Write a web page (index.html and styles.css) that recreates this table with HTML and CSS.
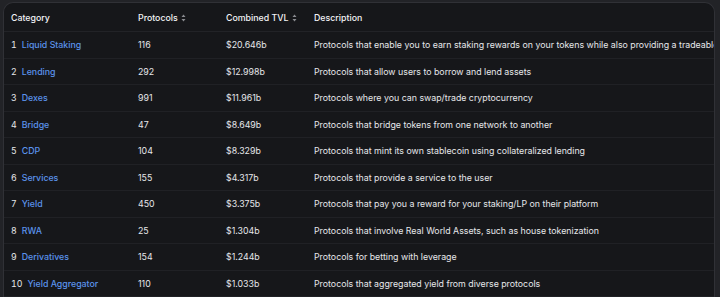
FILE: index.html
```html
<!DOCTYPE html>
<html lang="en">
<head>
    <meta charset="UTF-8">
    <title>Categories</title>
    <link rel="stylesheet" href="styles.css">
</head>
<body>
    <div class="card">
        <table class="cat-table">
            <thead>
                <tr>
                    <th class="col-cat">Category</th>
                    <th class="col-num">Protocols <svg class="sort" width="5" height="8" viewBox="0 0 5 8"><path d="M2.5 0.5 L4.5 3 L0.5 3 Z M2.5 7.5 L4.5 5 L0.5 5 Z" fill="#8a8b90"/></svg></th>
                    <th class="col-tvl">Combined TVL <svg class="sort" width="5" height="8" viewBox="0 0 5 8"><path d="M2.5 0.5 L4.5 3 L0.5 3 Z M2.5 7.5 L4.5 5 L0.5 5 Z" fill="#8a8b90"/></svg></th>
                    <th>Description</th>
                </tr>
            </thead>
            <tbody>
                <tr><td><span class="idx">1</span><a href="#">Liquid Staking</a></td><td>116</td><td>$20.646b</td><td>Protocols that enable you to earn staking rewards on your tokens while also providing a tradeable liquid receipt</td></tr>
                <tr><td><span class="idx">2</span><a href="#">Lending</a></td><td>292</td><td>$12.998b</td><td>Protocols that allow users to borrow and lend assets</td></tr>
                <tr><td><span class="idx">3</span><a href="#">Dexes</a></td><td>991</td><td>$11.961b</td><td>Protocols where you can swap/trade cryptocurrency</td></tr>
                <tr><td><span class="idx">4</span><a href="#">Bridge</a></td><td>47</td><td>$8.649b</td><td>Protocols that bridge tokens from one network to another</td></tr>
                <tr><td><span class="idx">5</span><a href="#">CDP</a></td><td>104</td><td>$8.329b</td><td>Protocols that mint its own stablecoin using collateralized lending</td></tr>
                <tr><td><span class="idx">6</span><a href="#">Services</a></td><td>155</td><td>$4.317b</td><td>Protocols that provide a service to the user</td></tr>
                <tr><td><span class="idx">7</span><a href="#">Yield</a></td><td>450</td><td>$3.375b</td><td>Protocols that pay you a reward for your staking/LP on their platform</td></tr>
                <tr><td><span class="idx">8</span><a href="#">RWA</a></td><td>25</td><td>$1.304b</td><td>Protocols that involve Real World Assets, such as house tokenization</td></tr>
                <tr><td><span class="idx">9</span><a href="#">Derivatives</a></td><td>154</td><td>$1.244b</td><td>Protocols for betting with leverage</td></tr>
                <tr><td><span class="idx">10</span><a href="#">Yield Aggregator</a></td><td>110</td><td>$1.033b</td><td>Protocols that aggregated yield from diverse protocols</td></tr>
            </tbody>
        </table>
    </div>
</body>
</html>
```

FILE: styles.css
```css
body {
    margin: 0;
    padding: 2px 5px 0 3px;
    background-color: #222327;
    font-family: Inter, "Noto Sans", sans-serif;
    font-size: 8.8px;
    color: #e6e7ea;
    overflow: hidden;
    height: 297px;
    box-sizing: border-box;
}
.card {
    background-color: #16171a;
    border: 1px solid #303136;
    border-bottom: none;
    border-radius: 10px 10px 0 0;
    overflow: hidden;
    height: 295px;
}
.cat-table {
    border-collapse: collapse;
    white-space: nowrap;
    table-layout: fixed;
    width: 1000px;
}
.cat-table th {
    text-align: left;
    font-weight: 500;
    color: #f2f3f5;
    height: 28px;
    padding: 0 0 0 7px;
    border-bottom: 1px solid #222327;
}
.cat-table td {
    height: 25.5px;
    padding: 0 0 0 7px;
    border-bottom: 1px solid #202125;
}
.col-cat {
    width: 120px;
}
.col-num {
    width: 81px;
}
.col-tvl {
    width: 81px;
}
.sort {
    vertical-align: middle;
    margin-left: 1px;
    margin-top: -1px;
}
.idx {
    display: inline-block;
    margin-right: 5px;
    font-variant-numeric: tabular-nums;
}
.cat-table a {
    color: #5b93ec;
    font-weight: 500;
    text-decoration: none;
}
```
